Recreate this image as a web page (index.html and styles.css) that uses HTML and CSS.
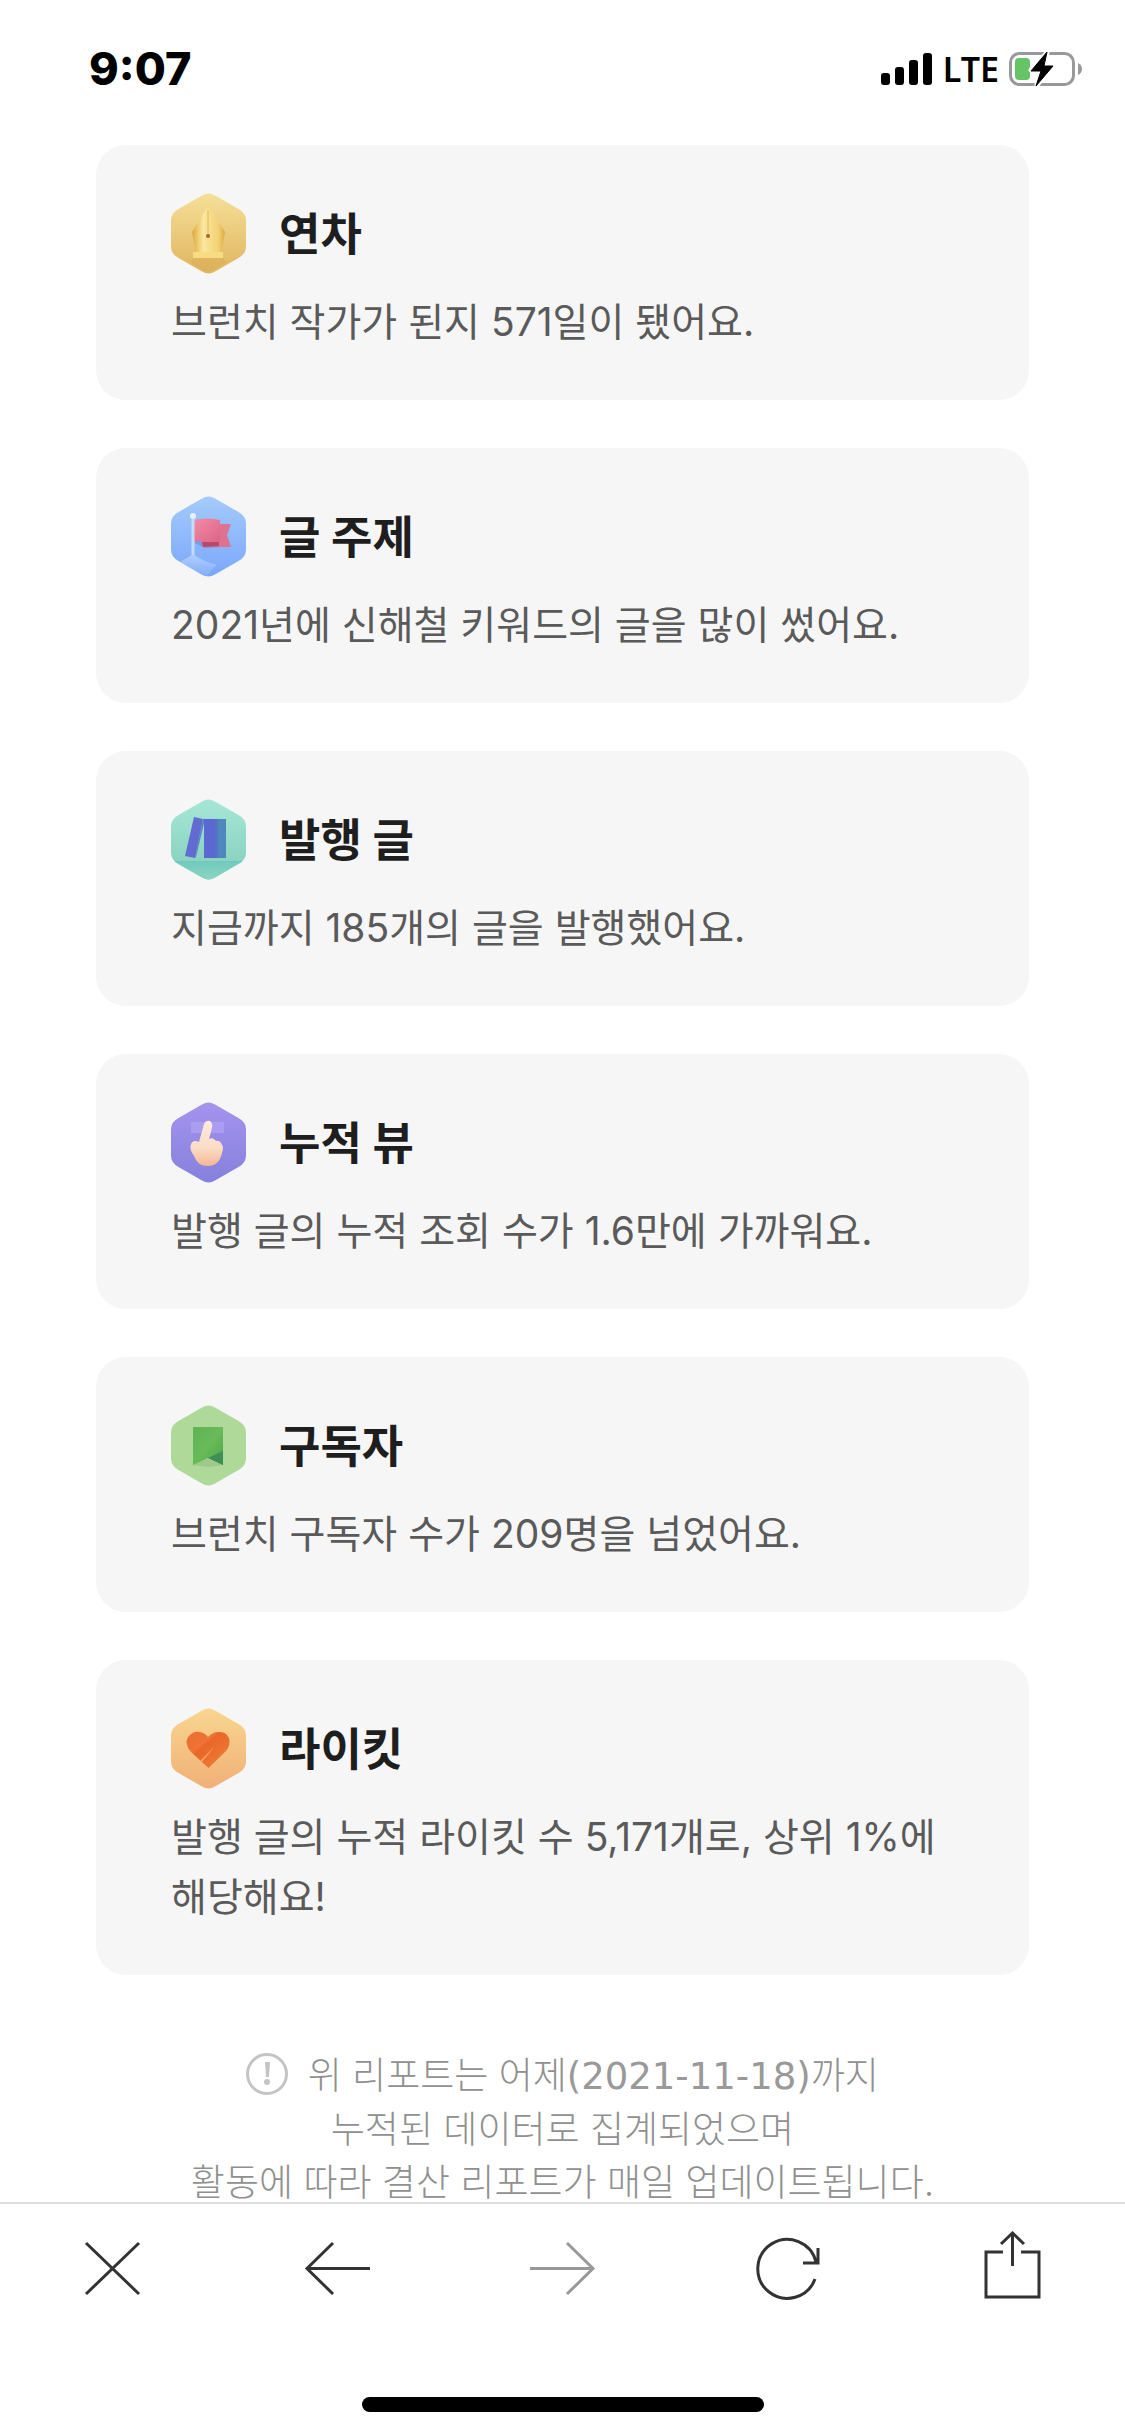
FILE: index.html
```html
<!DOCTYPE html>
<html lang="ko">
<head>
<meta charset="utf-8">
<meta name="viewport" content="width=device-width, initial-scale=1">
<title>브런치 결산 리포트</title>
<link rel="stylesheet" href="styles.css">
</head>
<body>
<header class="status">
  <time class="clock">9:07</time>
  <div class="signals">
    <svg width="52" height="34" viewBox="0 0 52 34" aria-hidden="true">
      <rect x="0" y="21" width="9" height="12" rx="3"/><rect x="14" y="15" width="9" height="18" rx="3"/><rect x="28" y="8" width="9" height="25" rx="3"/><rect x="42" y="1" width="9" height="32" rx="3"/>
    </svg>
    <span class="network">LTE</span>
    <svg width="74" height="36" viewBox="0 0 74 36" aria-hidden="true">
      <rect x="1.500" y="2.500" width="63" height="31" rx="9" fill="none" stroke="#999" stroke-width="3"/>
      <path d="M69 12q4 2 4 6t-4 6z" fill="#999"/>
      <rect x="6" y="7" width="15" height="22" rx="4" fill="#65c466"/>
      <path d="M38 2L22 19h10l-4 15L44 15H35l3-13z" stroke="#fff" stroke-width="5" stroke-linejoin="round" fill="#fff"/>
      <path d="M38 1L22 20h10l-5 15L44 15H35l3-14z" stroke="#000" stroke-width="1" stroke-linejoin="round"/>
    </svg>
  </div>
</header>

<main class="report">
  <svg class="defs" width="0" height="0" aria-hidden="true">
    <defs>
      <path id="hex" d="M31 2.500Q37.500-1.500 44 2.500L67.500 16Q75 20 75 27.500V53.500Q75 61 67.500 65L44 78.500Q37.500 82.500 31 78.500L7.500 65Q0 61 0 53.500V27.500Q0 20 7.500 16Z"/>
      <linearGradient id="gold" x2="0" y2="1"><stop stop-color="#f6df98"/><stop offset="1" stop-color="#dfb55f"/></linearGradient>
      <linearGradient id="nib" gradientUnits="userSpaceOnUse" x1="21" x2="54" y1="40" y2="40"><stop stop-color="#d9a63a"/><stop offset=".2" stop-color="#f0cf74"/><stop offset=".35" stop-color="#fbe7a0"/><stop offset=".6" stop-color="#f6da85"/><stop offset=".8" stop-color="#f3d176"/><stop offset="1" stop-color="#dba93f"/></linearGradient>
      <linearGradient id="blue" x2="0" y2="1"><stop stop-color="#a4cbfb"/><stop offset="1" stop-color="#7ba7fa"/></linearGradient>
      <linearGradient id="hill" x2="0" y2="1"><stop stop-color="#c5ddff"/><stop offset="1" stop-color="#85affb"/></linearGradient>
      <linearGradient id="pink" x2="1" y2="1"><stop stop-color="#f28ba6"/><stop offset="1" stop-color="#dd6487"/></linearGradient>
      <linearGradient id="mint" x2="0" y2="1"><stop stop-color="#a5e7d6"/><stop offset="1" stop-color="#85cdbb"/></linearGradient>
      <linearGradient id="shelf" x2="0" y2="1"><stop stop-color="#70c9bd"/><stop offset="1" stop-color="#8bd5c2"/></linearGradient>
      <linearGradient id="violet" x2="0" y2="1"><stop stop-color="#a593ef"/><stop offset="1" stop-color="#8581dc"/></linearGradient>
      <linearGradient id="skin" x2="0" y2="1"><stop stop-color="#fcebdc"/><stop offset=".6" stop-color="#fbdcc6"/><stop offset="1" stop-color="#f3b792"/></linearGradient>
      <linearGradient id="leaf" x2="1" y2="1"><stop stop-color="#5eb357"/><stop offset=".5" stop-color="#69bb58"/><stop offset="1" stop-color="#4ea44c"/></linearGradient>
      <linearGradient id="peach" x2="0" y2="1"><stop stop-color="#f8d68f"/><stop offset="1" stop-color="#f1b077"/></linearGradient>
      <linearGradient id="heart" x2="1" y2="1"><stop stop-color="#ee6b34"/><stop offset=".35" stop-color="#ee7434"/><stop offset=".4" stop-color="#e96629"/><stop offset="1" stop-color="#ef8238"/></linearGradient>
    </defs>
  </svg>

  <section class="card">
    <div class="card-head">
      <svg class="badge" viewBox="0 0 75 81" aria-hidden="true">
        <use href="#hex" fill="url(#gold)"/>
        <path d="M22 65h30l4 5-16 8q-3 1-7 0L20 70z" fill="#d9ab50" opacity=".4"/>
        <path d="M37 15Q39 15 40 18L54 39Q52 50 50 60H25Q23 50 21 39L34 18Q35 15 37 15Z" fill="url(#nib)"/>
        <path d="M37 17v25" stroke="#dfb553" stroke-width="1"/>
        <circle cx="37" cy="43" r="2" fill="#a5682c"/>
        <rect x="22" y="59" width="30" height="6" fill="#f8dc82"/>
      </svg>
      <h2>연차</h2>
    </div>
    <p>브런치 작가가 된지 571일이 됐어요.</p>
  </section>

  <section class="card">
    <div class="card-head">
      <svg class="badge" viewBox="0 0 75 81" aria-hidden="true">
        <use href="#hex" fill="url(#blue)"/>
        <path d="M9 66Q17 62 22 58Q29 64 46 69Q40 73 36 80Q33 80 31 79Z" fill="url(#hill)" opacity=".7"/>
        <path d="M24 43l28 8-18 1-10-5z" fill="#638be0" opacity=".6"/>
        <path d="M31 28h29l-4 11 4 12H31z" fill="#df7191"/>
        <path d="M31 46h17v4l-16 1z" fill="#b9486a"/>
        <path d="M23 24Q36 21 49 24V46Q36 44 23 46Z" fill="url(#pink)"/>
        <path d="M22 20v39" stroke="#c5ddfc" stroke-width="3"/>
        <circle cx="22" cy="20" r="3" fill="#e5f2ff"/>
      </svg>
      <h2>글 주제</h2>
    </div>
    <p>2021년에 신해철 키워드의 글을 많이 썼어요.</p>
  </section>

  <section class="card">
    <div class="card-head">
      <svg class="badge" viewBox="0 0 75 81" aria-hidden="true">
        <use href="#hex" fill="url(#mint)"/>
        <path d="M3 62H72L44 78.500Q37.500 82.500 31 78.500L7.500 65Z" fill="url(#shelf)"/>
        <path d="M23 18l9 2-8 39-10-2z" fill="#626bd2"/>
        <path d="M32 20h2l-9 38-1 1z" fill="#5286c4"/>
        <path d="M33 20h12v39H33z" fill="#5b68d2"/>
        <path d="M44 20h11v39H44z" fill="#4f86bd"/>
        <path d="M44 20h3v39h-3z" fill="#5474c5"/>
      </svg>
      <h2>발행 글</h2>
    </div>
    <p>지금까지 185개의 글을 발행했어요.</p>
  </section>

  <section class="card">
    <div class="card-head">
      <svg class="badge" viewBox="0 0 75 81" aria-hidden="true">
        <use href="#hex" fill="url(#violet)"/>
        <rect x="20" y="20" width="33" height="11" fill="#b5a7f3" opacity=".6"/>
        <path d="M28 40L33 22Q35 18 39 19Q42 21 41 26L38 37Q42 35 45 39Q49 38 51 43Q53 45 51 51Q48 64 37 64Q26 64 23 54Q18 47 20 42Q22 37 28 40Z" fill="url(#skin)"/>
      </svg>
      <h2>누적 뷰</h2>
    </div>
    <p>발행 글의 누적 조회 수가 1.6만에 가까워요.</p>
  </section>

  <section class="card">
    <div class="card-head">
      <svg class="badge" viewBox="0 0 75 81" aria-hidden="true">
        <use href="#hex" fill="#afd998"/>
        <path d="M21 60l16-6 16 6-15 2z" fill="#8fba7d" opacity=".5"/>
        <path d="M22 22h30v38l-15-7-15 7z" fill="url(#leaf)"/>
        <path d="M52 46v14l-15-7z" fill="#3e8e55"/>
      </svg>
      <h2>구독자</h2>
    </div>
    <p>브런치 구독자 수가 209명을 넘었어요.</p>
  </section>

  <section class="card">
    <div class="card-head">
      <svg class="badge" viewBox="0 0 75 81" aria-hidden="true">
        <use href="#hex" fill="url(#peach)"/>
        <path d="M37.500 60L20 44Q13 36 17 29Q22 23 29 24Q34 25 37 29Q42 24 47 24Q55 23 58 30Q60 37 55 43Z" fill="url(#heart)"/>
        <path d="M44 38L29 53l2 1Z" fill="#f8a25e"/>
      </svg>
      <h2>라이킷</h2>
    </div>
    <p>발행 글의 누적 라이킷 수 5,171개로, 상위 1%에 해당해요!</p>
  </section>

  <p class="note">
    <svg class="info" viewBox="0 0 42 42" aria-hidden="true"><circle cx="21" cy="21" r="19.500" fill="none" stroke="#c4c4c4" stroke-width="3"/><path d="M19 9h5l-1 15h-3z" fill="#c4c4c4"/><circle cx="21" cy="29" r="3" fill="#c4c4c4"/></svg>
    위 리포트는 어제<span class="date">(2021-11-18)</span>까지<br>누적된 데이터로 집계되었으며<br>활동에 따라 결산 리포트가 매일 업데이트됩니다.
  </p>
</main>

<footer class="browser-bar">
  <nav class="tools" aria-label="브라우저">
    <button type="button" aria-label="닫기"><svg viewBox="0 0 75 75"><path d="M11 12l53 51M64 12L11 63"/></svg></button>
    <button type="button" aria-label="뒤로"><svg viewBox="0 0 75 75"><path d="M33 12L7 37.500 33 63M7 37.500h63"/></svg></button>
    <button type="button" aria-label="앞으로" disabled><svg viewBox="0 0 75 75"><path d="M42 12l26 25.500L42 63M68 37.500H5"/></svg></button>
    <button type="button" aria-label="새로고침"><svg viewBox="0 0 75 75"><path d="M65 48A29.500 29.500 0 1 1 66 31M53 32h15V17"/></svg></button>
    <button type="button" aria-label="공유"><svg viewBox="0 0 75 75"><path d="M28 21H11v45h53V21H46M37.500 35V2M26 13L37.500 2 49 13"/></svg></button>
  </nav>
  <div class="home-indicator"></div>
</footer>
</body>
</html>
```
FILE: styles.css
```css
* {
  box-sizing: border-box;
}

body {
  margin: 0;
  height: 100vh;
  display: flex;
  flex-direction: column;
  background: #fff;
  color: #1e1e1e;
  font-family: Inter, "Noto Sans CJK KR", sans-serif;
}

h2,
p {
  margin: 0;
}

.status {
  flex: none;
  height: 145px;
  padding: 42px 42px 0 89px;
  display: flex;
  justify-content: space-between;
  align-items: flex-start;
  color: #000;
}

.clock {
  font-size: 45px;
  font-weight: 800;
  line-height: 54px;
}

.signals {
  display: flex;
  align-items: center;
  gap: 10px;
  height: 54px;
}

.network {
  font-family: "Noto Sans", sans-serif;
  font-size: 34px;
  font-weight: 600;
  line-height: 54px;
}

.report {
  flex: 1;
  min-height: 0;
  overflow-y: auto;
  scrollbar-width: none;
  padding: 0 96px;
  display: flex;
  flex-direction: column;
  gap: 48px;
}

.defs {
  position: absolute;
}

.card {
  flex: none;
  padding: 48px 75px;
  border-radius: 30px;
  background: #f6f6f6;
}

.card-head {
  display: flex;
  align-items: center;
  gap: 33px;
  margin-bottom: 18px;
}

.badge {
  width: 75px;
  height: 81px;
}

.card h2 {
  padding-top: 3px;
  font-size: 45px;
  font-weight: 700;
  line-height: 60px;
}

.card p {
  color: #5a5a5a;
  font-size: 39px;
  font-weight: 400;
  line-height: 60px;
}

.note {
  flex: none;
  padding-top: 26px;
  color: #909090;
  font-size: 37px;
  font-weight: 300;
  line-height: 53px;
  text-align: center;
}

.date {
  color: #999;
  font-family: "DejaVu Sans", sans-serif;
  font-weight: 400;
}

.info {
  width: 42px;
  height: 42px;
  margin-right: 9px;
  vertical-align: -6px;
}

.browser-bar {
  flex: none;
  height: 234px;
  border-top: 2px solid #ddd;
  background: #fff;
  display: flex;
  flex-direction: column;
  align-items: center;
  justify-content: space-between;
  padding: 27px 0 24px;
}

.tools {
  width: 100%;
  display: grid;
  grid-template-columns: repeat(5, 1fr);
  justify-items: center;
}

.tools button {
  width: 75px;
  height: 75px;
  padding: 0;
  border: 0;
  background: none;
  color: #333;
}

.tools button:disabled {
  color: #999;
}

.tools svg {
  display: block;
  width: 75px;
  height: 75px;
  fill: none;
  stroke: currentColor;
  stroke-width: 3;
}

.home-indicator {
  width: 402px;
  height: 15px;
  border-radius: 8px;
  background: #000;
}
```
